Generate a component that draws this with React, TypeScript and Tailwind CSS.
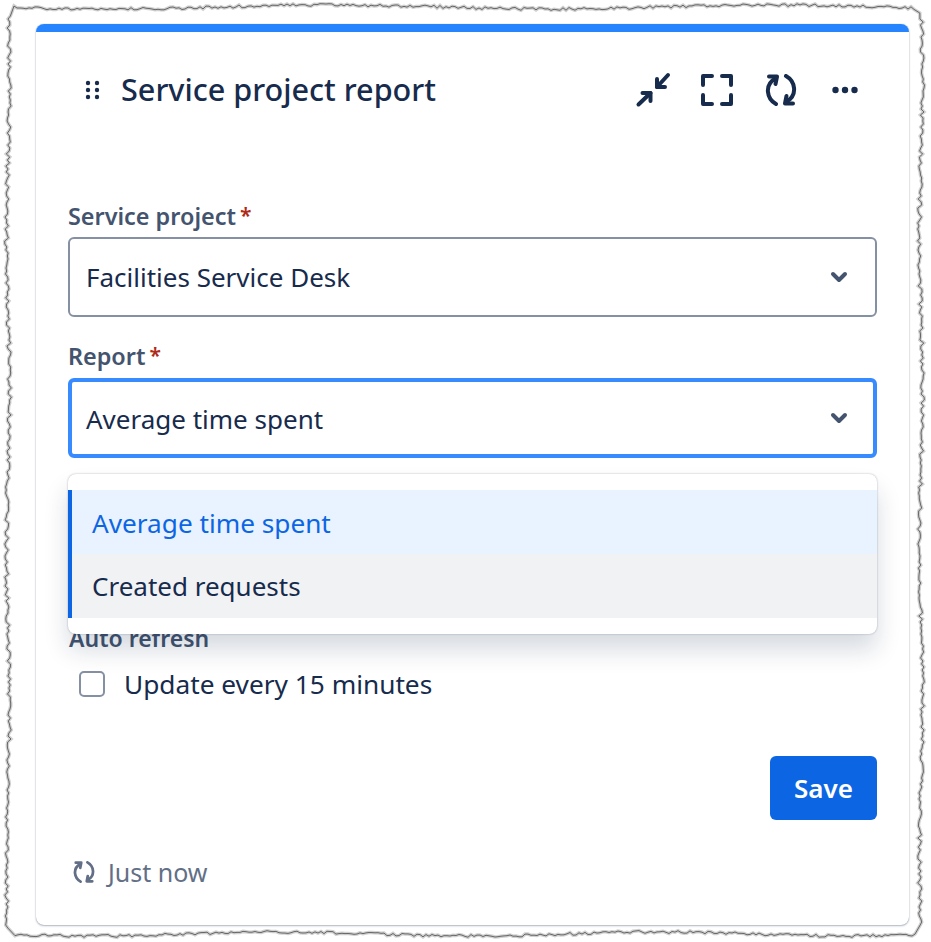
// Torn paper outline round the screenshot, jitter comes from a small seeded generator
const tornEdgePath = () => {
  let seed = 4711;
  const next = () => {
    seed = (seed * 16807) % 2147483647;
    return seed / 2147483647 - 0.5;
  };
  const points: string[] = [];
  const left = 8;
  const right = 921;
  const top = 7;
  const bottom = 934;
  for (let x = left + 6; x < right - 6; x += 3) points.push(`${x},${(top + next() * 3 + Math.sin(x / 70) * 2).toFixed(1)}`);
  for (let y = top + 6; y < bottom - 6; y += 3) points.push(`${(right + next() * 4 + Math.sin(y / 50) * 1.5).toFixed(1)},${y}`);
  for (let x = right - 6; x > left + 6; x -= 3) points.push(`${x},${(bottom + next() * 3 + Math.sin(x / 60) * 2).toFixed(1)}`);
  for (let y = bottom - 6; y > top + 6; y -= 3) points.push(`${(left + next() * 4 + Math.sin(y / 50) * 1.5).toFixed(1)},${y}`);
  return `M${points.join(" L")} Z`;
};

const ChevronDown = () => (
  <svg width="18" height="12" viewBox="0 0 18 12" fill="none" stroke="#44546f" strokeWidth="4" strokeLinecap="round" strokeLinejoin="round">
    <path d="M3 3 L9 9 L15 3" />
  </svg>
);

const RefreshIcon = ({ size, color }: { size: number; color: string }) => (
  <svg width={size} height={size} viewBox="0 0 32 32" fill="none" stroke={color} strokeWidth="4" strokeLinecap="round" strokeLinejoin="round">
    <path d="M11 30 C2 25 -1.5 11 11 4" />
    <path d="M4 2.5 L12 2.5 L10.5 10" />
    <path d="M21 2 C30 7 33.5 21 21 28" />
    <path d="M28 29.5 L20 29.5 L21.5 22" />
  </svg>
);

const Required = () => <span className="ml-[4px] align-[2px] text-[21px] text-[#ae2a19]">*</span>;

const Select = ({ value, focused }: { value: string; focused?: boolean }) => (
  <div
    className={
      focused
        ? "flex h-[80px] items-center justify-between rounded-[6px] border-[4px] border-[#388bff] bg-white pl-[14px] pr-[25px]"
        : "flex h-[80px] items-center justify-between rounded-[6px] border-2 border-[#8590a2] bg-white pl-[16px] pr-[27px]"
    }
  >
    <span className={focused ? "pt-[2px] text-[26px] text-[#172b4d]" : "text-[26px] text-[#172b4d]"}>{value}</span>
    <ChevronDown />
  </div>
);

export default function App() {
  return (
    <div className="relative h-[942px] w-[931px] overflow-hidden bg-white pl-[36px] pt-[24px] font-['Noto_Sans',sans-serif]">
      <svg className="absolute left-0 top-0" width="931" height="942" fill="none">
        <path d={tornEdgePath()} stroke="#8a8a8a" strokeWidth="3.5" opacity="0.4" />
        <path d={tornEdgePath()} stroke="#666666" strokeWidth="1" />
      </svg>

      <div className="relative flex h-[901px] w-[873px] flex-col overflow-hidden rounded-[8px] bg-white shadow-[0_1px_2px_rgba(9,30,66,0.3),0_0_1px_rgba(9,30,66,0.4)]">
        <div className="h-[8px] bg-[#2684ff]" />

        <div className="mt-[30px] flex h-[56px] items-center pl-[49px]">
          <svg width="16" height="20" viewBox="0 0 16 20" fill="#172b4d">
            <circle cx="3" cy="3" r="2.2" />
            <circle cx="12" cy="3" r="2.2" />
            <circle cx="3" cy="10" r="2.2" />
            <circle cx="12" cy="10" r="2.2" />
            <circle cx="3" cy="17" r="2.2" />
            <circle cx="12" cy="17" r="2.2" />
          </svg>
          <h1 className="ml-[20px] text-[30.6px] font-medium text-[#172b4d]">Service project report</h1>
          <svg className="ml-auto" width="36" height="36" viewBox="0 0 36 36" fill="none" stroke="#172b4d" strokeWidth="4" strokeLinecap="round" strokeLinejoin="round">
            <path d="M33 3 L22 15" />
            <path d="M22 7 L22 15 L30 15" />
            <path d="M3.5 32.5 L15.5 21" />
            <path d="M7.5 21 L15.5 21 L15.5 29" />
          </svg>
          <svg className="ml-[30px]" width="32" height="32" viewBox="0 0 32 32" fill="none" stroke="#172b4d" strokeWidth="4" strokeLinecap="round" strokeLinejoin="round">
            <path d="M11 2 L2 2 L2 11" />
            <path d="M21 2 L30 2 L30 11" />
            <path d="M2 21 L2 30 L11 30" />
            <path d="M30 21 L30 30 L21 30" />
          </svg>
          <span className="ml-[32px]">
            <RefreshIcon size={32} color="#172b4d" />
          </span>
          <svg className="ml-[35px] mr-[51px]" width="26" height="8" viewBox="0 0 26 8" fill="#172b4d">
            <circle cx="3.5" cy="4" r="3.2" />
            <circle cx="13" cy="4" r="3.2" />
            <circle cx="22.5" cy="4" r="3.2" />
          </svg>
        </div>

        <div className="relative flex flex-1 flex-col px-[32px]">
          <label className="mt-[82px] h-[37px] text-[23.4px] font-semibold leading-[30px] text-[#44546f]">
            Service project
            <Required />
          </label>
          <Select value="Facilities Service Desk" />

          <label className="mt-[23px] h-[38px] text-[23.4px] font-semibold leading-[30px] text-[#44546f]">
            Report
            <Required />
          </label>
          <Select value="Average time spent" focused />

          <label className="ml-[1px] mt-[165px] h-[30px] text-[23px] font-semibold leading-[30px] text-[#44546f]">Auto refresh</label>
          <div className="mt-[13px] flex items-center pl-[11px]">
            <span className="h-[26px] w-[26px] rounded-[5px] border-2 border-[#8590a2] bg-white" />
            <span className="ml-[19px] text-[26.25px] leading-[36px] text-[#172b4d]">Update every 15 minutes</span>
          </div>

          <div className="mt-[54px] flex justify-end">
            <button className="h-[64px] w-[107px] rounded-[6px] bg-[#0c66e4] text-[26px] font-semibold text-white">Save</button>
          </div>

          <div className="mt-[32px] flex items-center pl-[5px] text-[25px] leading-[40px] text-[#626f86]">
            <RefreshIcon size={22} color="#626f86" />
            <span className="ml-[13px]">Just now</span>
          </div>

          <div className="absolute left-[32px] right-[32px] top-[356px] rounded-[8px] bg-white py-[16px] shadow-[0_16px_24px_rgba(9,30,66,0.16),0_0_2px_rgba(9,30,66,0.35)]">
            <div className="flex h-[64px] items-center border-l-[4px] border-[#0c66e4] bg-[#e9f2ff] pl-[20px] pt-[3px] text-[26.2px] text-[#0c66e4]">Average time spent</div>
            <div className="flex h-[64px] items-center border-l-[4px] border-[#0c66e4] bg-[#f1f2f4] pl-[20px] pt-[1px] text-[26px] text-[#172b4d]">Created requests</div>
          </div>
        </div>
      </div>
    </div>
  );
}
